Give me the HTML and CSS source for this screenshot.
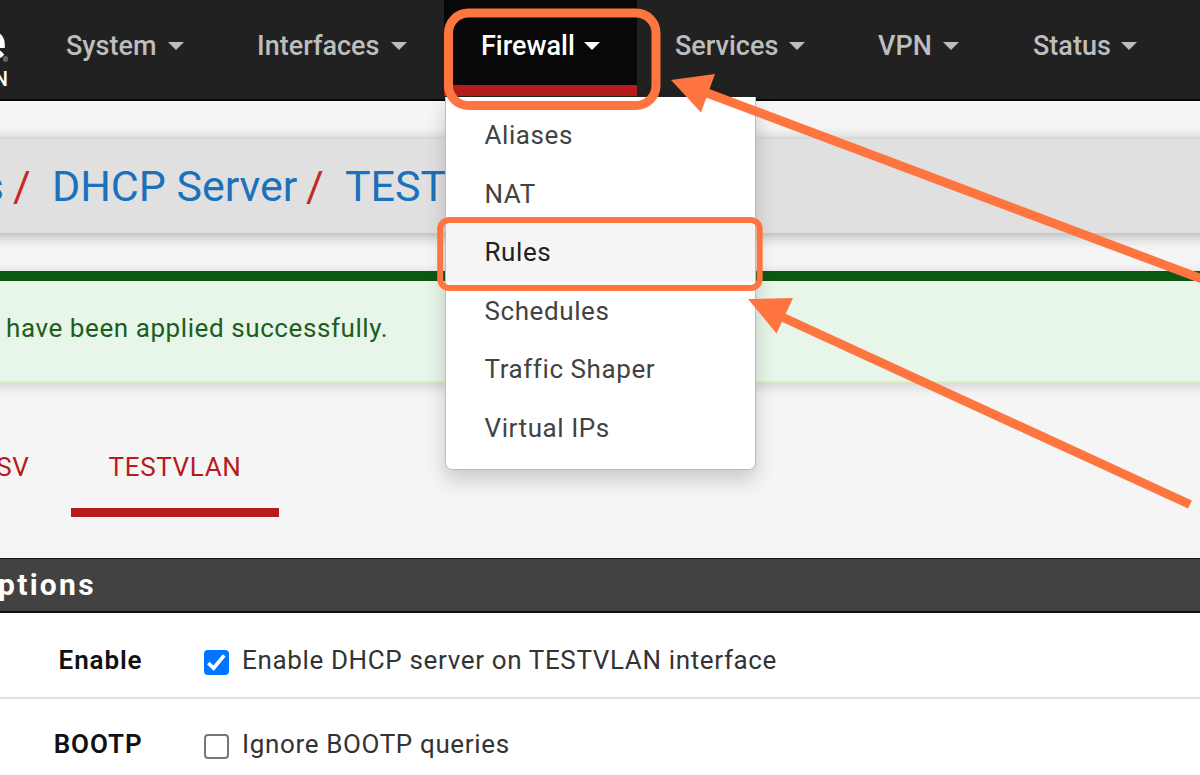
FILE: index.html
```
<!DOCTYPE html>
<html lang="en">
<head>
<meta charset="utf-8">
<title>DHCP Server</title>
<link rel="stylesheet" href="styles.css">
</head>
<body>
<header class="navbar">
  <div class="brand"><span class="brand-name">e</span><span class="brand-dot"></span><span class="brand-sub">N</span></div>
  <nav class="menu">
    <a class="menu-item system"><span>System</span><i class="caret"></i></a>
    <a class="menu-item interfaces"><span>Interfaces</span><i class="caret"></i></a>
    <div class="menu-item firewall active"><span>Firewall</span><i class="caret"></i>
      <ul class="dropdown">
        <li>Aliases</li>
        <li>NAT</li>
        <li class="hover">Rules</li>
        <li>Schedules</li>
        <li>Traffic Shaper</li>
        <li>Virtual IPs</li>
      </ul>
    </div>
    <a class="menu-item services"><span>Services</span><i class="caret"></i></a>
    <a class="menu-item vpn"><span>VPN</span><i class="caret"></i></a>
    <a class="menu-item status"><span>Status</span><i class="caret"></i></a>
  </nav>
</header>
<main>
  <div class="breadcrumb"><span class="crumb first">s</span><span class="sep">/</span><span class="crumb server">DHCP Server</span><span class="sep">/</span><span class="crumb last">TEST</span></div>
  <div class="alert">have been applied successfully.</div>
  <div class="tabs"><span class="tab tab-cut">SV</span><span class="tab tab-active">TESTVLAN</span></div>
  <section class="panel">
    <h2 class="panel-heading">ptions</h2>
    <div class="row"><span class="label">Enable</span><span class="check checked"><svg width="26" height="26" viewBox="0 0 26 26"><path d="M4.500 13.500l5.500 5.500L21 5.500" fill="none" stroke="#fff" stroke-width="3.800"/></svg></span><span class="value">Enable DHCP server on TESTVLAN interface</span></div>
    <div class="row"><span class="label">BOOTP</span><span class="check"></span><span class="value">Ignore BOOTP queries</span></div>
  </section>
</main>
<svg class="annotations" width="1200" height="775" viewBox="0 0 1200 775">
  <g fill="none" stroke="#ff7540">
    <rect x="448.500" y="13" width="207.500" height="92.500" rx="20" stroke-width="9"/>
    <rect x="440.200" y="220" width="319.500" height="68" rx="9" stroke-width="6"/>
    <path d="M707 93L1210 282" stroke-width="9"/>
    <path d="M782 317L1190 504.500" stroke-width="9"/>
  </g>
  <g fill="#ff7540">
    <path d="M671 80L715 74L701 112.500z"/>
    <path d="M748 299L793 298L776.500 333.500z"/>
  </g>
</svg>
</body>
</html>
```
FILE: styles.css
```
* { box-sizing: border-box; }
body {
  margin: 0;
  width: 1200px;
  height: 775px;
  overflow: hidden;
  background: #f5f5f5;
  color: #333;
  font: 26px/36px Roboto, sans-serif;
  letter-spacing: 0.64px;
}
.navbar {
  display: flex;
  height: 101px;
  background: #212121;
  border-bottom: 2px solid #080808;
}
.brand {
  position: relative;
  width: 29px;
  height: 99px;
  color: #fff;
}
.brand-name {
  position: absolute;
  right: 23px;
  top: 14px;
  font-size: 52px;
  line-height: 56px;
  font-weight: 700;
  letter-spacing: 0;
}
.brand-dot {
  position: absolute;
  left: 3px;
  top: 56px;
  width: 5px;
  height: 6px;
  border-radius: 3px;
  background: #666;
}
.brand-sub {
  position: absolute;
  right: 21px;
  top: 67px;
  font-size: 20px;
  line-height: 24px;
  font-weight: 500;
  letter-spacing: 0;
}
.menu { display: flex; }
.menu-item {
  position: relative;
  display: flex;
  justify-content: space-between;
  height: 96px;
  padding: 28px 37px 0 37px;
  color: #bdbdbd;
  font-size: 27px;
  font-weight: 500;
  letter-spacing: 0;
}
.system { width: 191px; padding-right: 36px; }
.interfaces { width: 224px; }
.firewall { width: 193px; }
.services { width: 204px; padding-left: 38px; padding-right: 36px; }
.vpn { width: 155px; }
.status { width: 178px; }
.active {
  color: #fff;
  background: #080808;
  border-bottom: 11px solid #b71c1c;
}
.caret {
  margin-top: 14px;
  height: 8px;
  border: 8px solid transparent;
  border-top-color: currentColor;
  border-bottom: 0;
}
.dropdown {
  position: absolute;
  z-index: 2;
  left: 1px;
  top: 97px;
  width: 311px;
  height: 373px;
  margin: 0;
  padding: 9px 0;
  list-style: none;
  color: #424242;
  background: #fff;
  border: 1px solid #bdbdbd;
  border-top: 0;
  border-radius: 0 0 7px 7px;
  box-shadow: 0 10px 20px rgba(0, 0, 0, .18);
  font-size: 26px;
  font-weight: 400;
  letter-spacing: 0.58px;
}
.dropdown li {
  height: 58.500px;
  padding-left: 38.500px;
  line-height: 58.500px;
}
.dropdown .hover {
  color: #212121;
  background: #f5f5f5;
}
.breadcrumb {
  display: flex;
  height: 94px;
  margin: 38px -30px 0;
  padding: 18px 30px 0;
  background: #e0e0e0;
  box-shadow: 0 2px 14px rgba(0, 0, 0, .32);
  font-size: 43px;
  line-height: 58px;
  letter-spacing: -0.05px;
  white-space: nowrap;
}
.crumb { color: #1b72ba; }
.crumb.first {
  display: flex;
  justify-content: flex-end;
  width: 4px;
  margin-right: 9px;
}
.sep {
  width: 39px;
  color: #c62828;
}
.server { width: 254px; }
.alert {
  height: 112px;
  margin: 38px -30px 0;
  padding: 29px 30px 0 36px;
  color: #1b5e20;
  letter-spacing: 0.58px;
  background: #e8f5e9;
  border-top: 10px solid #0d5714;
  border-bottom: 2px solid #dcedc8;
  box-shadow: 0 3px 12px rgba(0, 0, 0, .16);
}
.tabs {
  display: flex;
  margin-top: 48px;
  height: 86px;
  color: #b71c1c;
  letter-spacing: 0.64px;
}
.tab {
  display: flex;
  justify-content: center;
  height: 86px;
  padding-top: 18px;
}
.tab-cut {
  justify-content: flex-end;
  width: 29.500px;
  margin-right: 41.500px;
}
.tab-active {
  width: 208px;
  border-bottom: 9px solid #b71c1c;
}
.panel {
  margin-top: 41px;
  height: 217px;
  background: #fff;
}
.panel-heading {
  margin: 0 0 0 -2px;
  height: 55px;
  padding-top: 8px;
  color: #fff;
  background: #424242;
  border-top: 1px solid #161616;
  border-bottom: 2px solid #101010;
  font-size: 30px;
  line-height: 36px;
  font-weight: 700;
  letter-spacing: 2.300px;
}
.row {
  display: flex;
  height: 86px;
  padding-top: 29px;
  border-bottom: 2px solid #e0e0e0;
}
.row + .row { padding-top: 27px; }
.label {
  width: 142.500px;
  text-align: right;
  color: #111;
  font-weight: 600;
  letter-spacing: 0.9px;
}
.check {
  width: 25px;
  height: 25px;
  margin: 8px 13px 0 61.500px;
  border: 2px solid #767676;
  border-radius: 4px;
}
.checked {
  border: 0;
  background: #0075ff;
}
.checked svg { display: block; width: 25px; height: 25px; }
.annotations {
  position: absolute;
  z-index: 3;
  left: 0;
  top: 0;
}
```
